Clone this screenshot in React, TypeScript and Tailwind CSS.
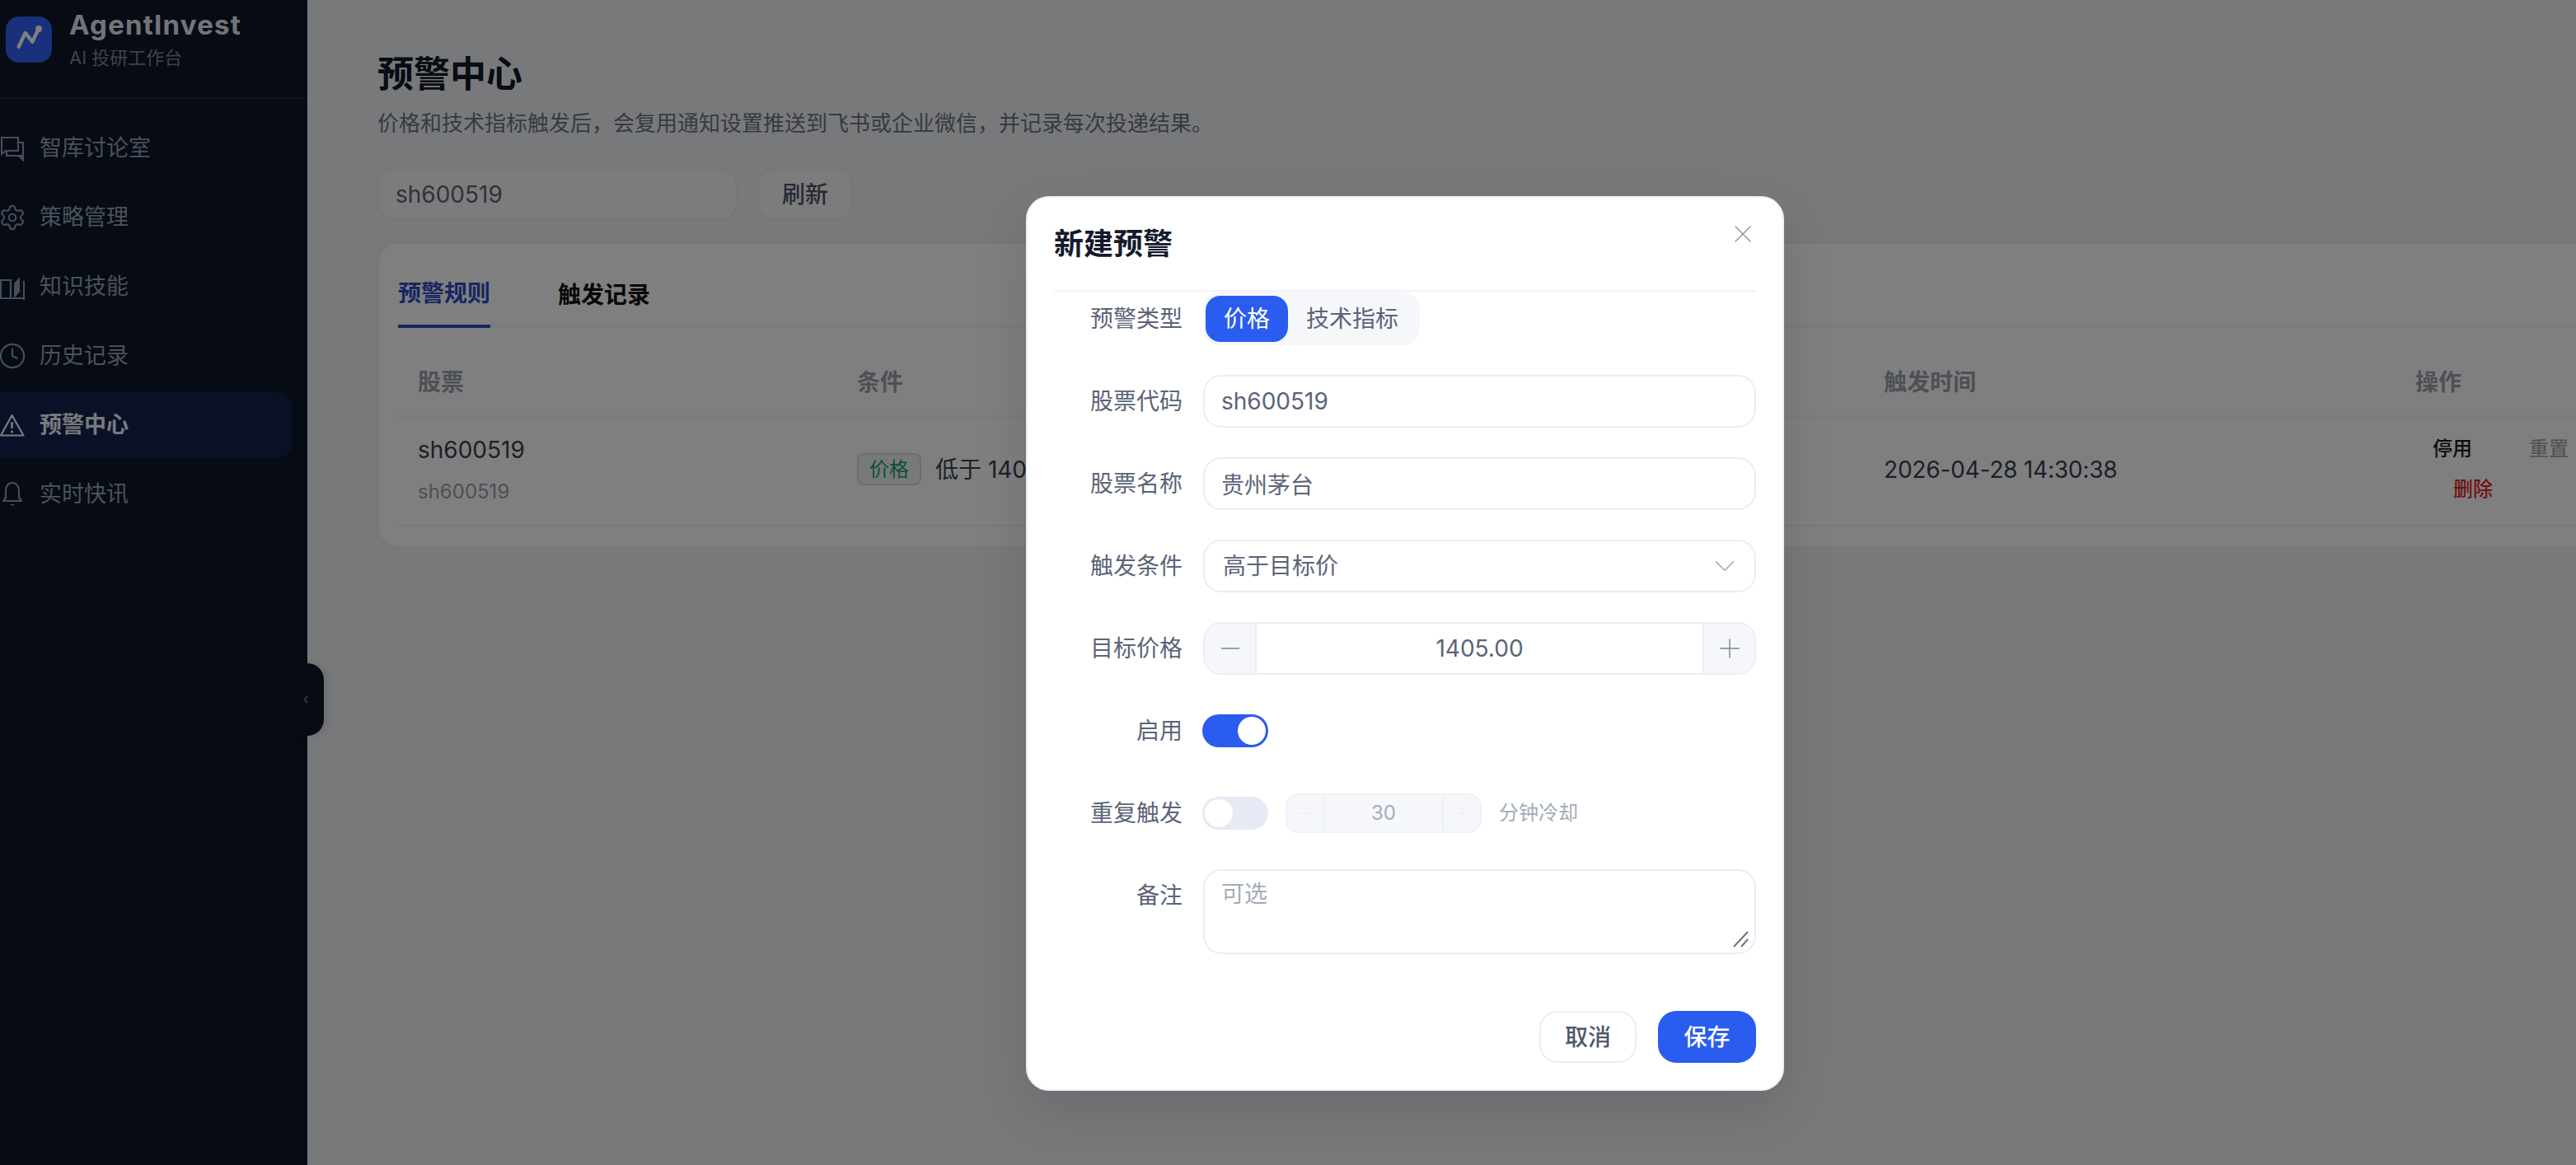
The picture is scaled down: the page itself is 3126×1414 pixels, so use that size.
import React from 'react';
import { Settings, Clock, X, ChevronDown, ChevronLeft, Plus, Minus } from 'lucide-react';

const font = 'font-["Inter","Noto_Sans_CJK_SC",sans-serif]';

const IconChat = () => (
  <svg width="28" height="32" viewBox="0 0 28 32" fill="none" stroke="currentColor" strokeWidth="2.2" className="shrink-0">
    <path d="M1 3H21V19H6L1 23Z" />
    <path d="M21 9H27V30L22 25H7V20" />
    <path d="M27 30L22 25H27Z" fill="currentColor" />
  </svg>
);

const IconBook = () => (
  <svg width="30" height="32" viewBox="0 0 30 32" fill="none" stroke="currentColor" strokeWidth="2.2" className="shrink-0">
    <path d="M1 8H13V30H1Z" />
    <path d="M1 30H29M29 9V32" />
    <path d="M17 12L24 4V22L17 30Z" fill="currentColor" stroke="none" />
  </svg>
);

const IconAlert = () => (
  <svg width="30" height="30" viewBox="0 0 30 30" fill="none" stroke="currentColor" strokeWidth="2.2" className="shrink-0">
    <path d="M14.5 3L1 27.5H28.5Z" strokeLinejoin="round" />
    <path d="M14.5 11V19" strokeWidth="2.6" />
    <circle cx="14.5" cy="23" r="1.6" fill="currentColor" stroke="none" />
  </svg>
);

const IconBell = () => (
  <svg width="28" height="32" viewBox="0 0 28 32" fill="none" stroke="currentColor" strokeWidth="2.2" className="shrink-0">
    <path d="M14 2C8.5 2 6 7 6 12V20L3 24H25L22 20V12C22 7 19.5 2 14 2Z" strokeLinejoin="round" />
    <path d="M11 28H17L14 30Z" fill="currentColor" stroke="none" />
  </svg>
);

const navItems = [
  { label: '智库讨论室', icon: <IconChat /> },
  { label: '策略管理', icon: <Settings size={34} strokeWidth={1.55} className="shrink-0" /> },
  { label: '知识技能', icon: <IconBook /> },
  { label: '历史记录', icon: <Clock size={34} strokeWidth={1.55} className="shrink-0" /> },
  { label: '预警中心', icon: <IconAlert />, active: true },
  { label: '实时快讯', icon: <IconBell /> },
];

const FormRow = ({ label, top, children }: { label: string; top?: boolean; children: React.ReactNode }) => (
  <div className={`flex gap-[25px] ${top ? 'items-start' : 'items-center'} min-h-[64px]`}>
    <label className="flex h-[64px] w-[156px] shrink-0 items-center justify-end text-[28px] text-[#5b6478]">{label}</label>
    <div className="min-w-0 flex-1">{children}</div>
  </div>
);

const App = () => {
  return (
    <div className={`relative flex h-screen w-screen overflow-hidden bg-[#f1f3f6] ${font}`}>
      {/* 侧边栏 */}
      <aside className="relative w-[373px] shrink-0 bg-[#0d1728]">
        <div className="flex h-[120px] gap-[21px] border-b-2 border-[#1a2436] pl-[7px] pt-[20px]">
          <div className="flex h-[56px] w-[56px] shrink-0 items-center justify-center rounded-[16px] bg-[#3360f5]">
            <svg width="56" height="56" viewBox="0 0 56 56" fill="none">
              <path d="M15.7 36.7L23.7 20L32.3 30.7L39.7 15" stroke="#ffffff" strokeWidth="4.4" strokeLinecap="round" strokeLinejoin="round" />
              <circle cx="40" cy="15" r="4" fill="#ffffff" />
            </svg>
          </div>
          <div className="-mt-[10px] flex flex-col">
            <span className="text-[33px] font-bold leading-[40px] tracking-[1.2px] text-[#e2e8f0]">AgentInvest</span>
            <span className="mt-[4px] text-[22px] leading-[32px] text-[#7b8699]">AI 投研工作台</span>
          </div>
        </div>
        <nav className="flex flex-col gap-[4px] pt-[20px]">
          {navItems.map((item) => (
            <div
              key={item.label}
              className={`flex h-[80px] w-[355px] items-center gap-[19px] rounded-r-[20px] ${
                item.active ? 'bg-[#15234f] font-semibold text-[#f1f5f9]' : 'text-[#94a3b8]'
              }`}
            >
              <span className={`flex w-[29px] justify-center ${item.active ? 'text-[#f1f5f9]' : 'text-[#8b9ab8]'}`}>{item.icon}</span>
              <span className="text-[27px]">{item.label}</span>
            </div>
          ))}
        </nav>
        <div className="absolute left-[349px] top-[805px] flex h-[88px] w-[44px] items-center justify-center rounded-r-[20px] bg-[#0d1728] text-[#7d8ba8] shadow-[4px_0_12px_rgba(0,0,0,0.12)]">
          <ChevronLeft size={14} strokeWidth={2.2} />
        </div>
      </aside>

      {/* 主内容 */}
      <main className="min-w-0 flex-1 pl-[85px] pt-[64px]">
        <h1 className="text-[44px] font-bold leading-[52px] text-[#111827]">预警中心</h1>
        <p className="mt-[14px] text-[26px] leading-[40px] text-[#6b7484]">价格和技术指标触发后，会复用通知设置推送到飞书或企业微信，并记录每次投递结果。</p>
        <div className="mt-[35px] flex gap-[24px]">
          <div className="flex h-[62px] w-[437px] items-center rounded-[20px] border-2 border-[#eaedf2] bg-[#f8f9fb] px-[20px] text-[28px] text-[#5b6478]">sh600519</div>
          <button className="h-[62px] w-[116px] rounded-[20px] border-2 border-[#eaedf2] bg-[#f8f9fb] text-[28px] font-medium text-[#4b5565]">刷新</button>
        </div>

        <section className="mt-[27px] w-[2720px] rounded-[24px] border-2 border-[#eef0f4] bg-white px-[23px] pb-[24px] pt-[22px]">
          <div className="flex gap-[82px] border-b-4 border-[#f3f4f7]">
            <div className="-mb-[4px] flex h-[80px] items-center border-b-4 border-[#2f4fc4] text-[28px] font-semibold text-[#2f4fc4]">预警规则</div>
            <div className="-mb-[4px] flex h-[80px] items-center text-[28px] font-semibold text-[#111111]">触发记录</div>
          </div>
          <div className="mt-[26px] grid h-[82px] grid-cols-[533px_1246px_645px_1fr] items-center border-b-2 border-[#f3f4f7] text-[28px] font-semibold text-[#9aa1ae]">
            <div className="pl-[24px]">股票</div>
            <div className="pl-[24px]">条件</div>
            <div className="pl-[24px]">触发时间</div>
            <div className="pl-[24px]">操作</div>
          </div>
          <div className="grid h-[133px] grid-cols-[533px_1246px_645px_1fr] items-center border-b-2 border-[#f3f4f7] pb-[4px] text-[28px] text-[#374151]">
            <div className="flex flex-col gap-[12px] pl-[24px]">
              <span className="leading-[42px]">sh600519</span>
              <span className="text-[24px] leading-[36px] text-[#9aa1ae]">sh600519</span>
            </div>
            <div className="flex items-center gap-[17px] pl-[24px]">
              <span className="flex h-[39px] w-[78px] items-center justify-center rounded-[8px] border-2 border-[#d5dfd9] bg-[#eff5f1] text-[24px] text-[#15a36d]">价格</span>
              <span>低于 1405.00</span>
            </div>
            <div className="pl-[24px] tracking-[-0.2px]">2026-04-28 14:30:38</div>
            <div className="flex flex-col gap-[13px] pl-[45px] text-[24px] font-medium leading-[36px]">
              <div className="flex gap-[69px]">
                <span className="text-[#111827]">停用</span>
                <span className="text-[#a2a8b4]">重置</span>
              </div>
              <span className="ml-[25px] text-[#dc2626]">删除</span>
            </div>
          </div>
        </section>
      </main>

      {/* 遮罩 */}
      <div className="absolute inset-0 bg-black/50" />

      {/* 新建预警弹窗 */}
      <div className="absolute left-[1245px] top-[238px] w-[920px] rounded-[28px] border-2 border-[#eef1f8] bg-white px-[32px] pb-[32px] shadow-[0_24px_64px_rgba(0,0,0,0.12)]">
        <div className="flex h-[114px] items-center border-b-2 border-[#f1f3fa]">
          <h2 className="text-[36px] font-bold text-[#151b2b]">新建预警</h2>
        </div>
        <X size={36} strokeWidth={0.9} className="absolute right-[30px] top-[26px] text-[#8a92a3]" />

        <div className="flex flex-col gap-[36px]">
          <FormRow label="预警类型">
            <div className="flex h-[65px] w-[263px] items-center rounded-[20px] bg-[#f5f7fb] pl-[3px] text-[28px]">
              <span className="flex h-[56px] w-[100px] items-center justify-center rounded-[18px] bg-[#2b5cf0] text-white">价格</span>
              <span className="pl-[22px] text-[#5b6478]">技术指标</span>
            </div>
          </FormRow>
          <FormRow label="股票代码">
            <input readOnly value="sh600519" className="h-[64px] w-full rounded-[22px] border-2 border-[#e9edf6] px-[20px] text-[28px] text-[#5b6478] outline-none" />
          </FormRow>
          <FormRow label="股票名称">
            <input readOnly value="贵州茅台" className="h-[64px] w-full rounded-[22px] border-2 border-[#e9edf6] px-[20px] text-[28px] text-[#5b6478] outline-none" />
          </FormRow>
          <FormRow label="触发条件">
            <div className="flex h-[64px] items-center justify-between rounded-[22px] border-2 border-[#e9edf6] pl-[22px] pr-[15px] text-[28px] text-[#5b6478]">
              <span>高于目标价</span>
              <ChevronDown size={42} strokeWidth={0.8} className="text-[#9aa2b2]" />
            </div>
          </FormRow>
          <FormRow label="目标价格">
            <div className="flex h-[64px] items-stretch overflow-hidden rounded-[22px] border-2 border-[#e9edf6] text-[#5b6478]">
              <span className="flex w-[63px] items-center justify-center border-r-2 border-[#e9edf6] bg-[#f5f7fb]">
                <Minus size={36} strokeWidth={1} className="text-[#7a8294]" />
              </span>
              <span className="flex flex-1 items-center justify-center text-[28px]">1405.00</span>
              <span className="flex w-[63px] items-center justify-center border-l-2 border-[#e9edf6] bg-[#f5f7fb]">
                <Plus size={38} strokeWidth={0.9} className="text-[#7a8294]" />
              </span>
            </div>
          </FormRow>
          <FormRow label="启用">
            <div className="-ml-[1px] flex h-[40px] w-[80px] items-center justify-end rounded-full bg-[#2b5cf0] pr-[3px]">
              <span className="h-[34px] w-[34px] rounded-full bg-white" />
            </div>
          </FormRow>
          <FormRow label="重复触发">
            <div className="flex items-center">
              <div className="-ml-[1px] flex h-[40px] w-[80px] items-center rounded-full bg-[#e6eaf4] pl-[3px]">
                <span className="h-[34px] w-[34px] rounded-full bg-white" />
              </div>
              <div className="ml-[21px] flex h-[48px] w-[238px] items-stretch overflow-hidden rounded-[16px] border-2 border-[#eef1f8] bg-[#f5f7fb] text-[24px] text-[#a3abbb]">
                <span className="flex w-[46px] items-center justify-center border-r-2 border-[#eef1f8]">
                  <Minus size={30} strokeWidth={1} className="text-[#eceff5]" />
                </span>
                <span className="flex flex-1 items-center justify-center">30</span>
                <span className="flex w-[46px] items-center justify-center border-l-2 border-[#eef1f8]">
                  <Plus size={30} strokeWidth={1} className="text-[#eceff5]" />
                </span>
              </div>
              <span className="ml-[21px] text-[24px] text-[#a3abbb]">分钟冷却</span>
            </div>
          </FormRow>
          <FormRow label="备注" top>
            <div className="relative">
              <textarea
                readOnly
                placeholder="可选"
                className="block h-[103px] w-full resize-none rounded-[22px] border-2 border-[#e9edf6] px-[20px] py-[8px] text-[28px] leading-[40px] outline-none placeholder:text-[#a3abbb]"
              />
              <svg width="20" height="20" viewBox="0 0 20 20" className="absolute bottom-[8px] right-[8px]" stroke="#6b7280" strokeWidth="2">
                <path d="M1 19L18 1M10 19L18 10" />
              </svg>
            </div>
          </FormRow>
        </div>

        <div className="mt-[69px] flex justify-end gap-[26px]">
          <button className="h-[63px] w-[118px] rounded-[22px] border-2 border-[#e9edf6] bg-white text-[28px] font-medium text-[#4f586b]">取消</button>
          <button className="h-[63px] w-[119px] rounded-[22px] bg-[#2b5cf0] text-[28px] font-medium text-white">保存</button>
        </div>
      </div>
    </div>
  );
};

export default App;
